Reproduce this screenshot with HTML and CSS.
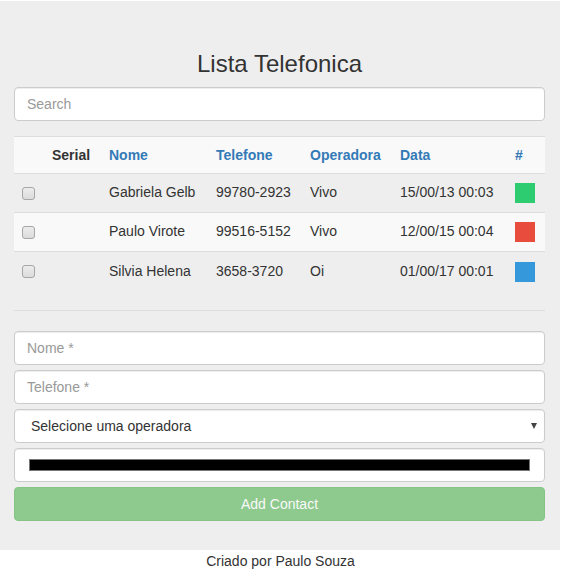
FILE: index.html
```html
<!DOCTYPE html>
<html lang="pt">
<head>
<meta charset="utf-8">
<title>Lista Telefonica</title>
<link rel="stylesheet" href="styles.css">
</head>
<body>
<div class="jumbo">
  <h3 class="title">Lista Telefonica</h3>
  <input class="form-control search" type="text" placeholder="Search">
  <table class="contacts">
    <colgroup>
      <col class="c1"><col class="c2"><col class="c3"><col class="c4"><col class="c5"><col class="c6"><col class="c7">
    </colgroup>
    <tbody>
      <tr class="head">
        <td></td>
        <th class="serial">Serial</th>
        <th><a href="#">Nome</a></th>
        <th><a href="#">Telefone</a></th>
        <th><a href="#">Operadora</a></th>
        <th><a href="#">Data</a></th>
        <th><a href="#">#</a></th>
      </tr>
      <tr>
        <td><input type="checkbox" class="check"></td>
        <td></td>
        <td>Gabriela Gelb</td>
        <td>99780-2923</td>
        <td>Vivo</td>
        <td>15/00/13 00:03</td>
        <td><span class="swatch green"></span></td>
      </tr>
      <tr class="alt">
        <td><input type="checkbox" class="check"></td>
        <td></td>
        <td>Paulo Virote</td>
        <td>99516-5152</td>
        <td>Vivo</td>
        <td>12/00/15 00:04</td>
        <td><span class="swatch red"></span></td>
      </tr>
      <tr>
        <td><input type="checkbox" class="check"></td>
        <td></td>
        <td>Silvia Helena</td>
        <td>3658-3720</td>
        <td>Oi</td>
        <td>01/00/17 00:01</td>
        <td><span class="swatch blue"></span></td>
      </tr>
    </tbody>
  </table>
  <hr class="divider">
  <form class="add-form">
    <input class="form-control" type="text" placeholder="Nome *">
    <input class="form-control" type="text" placeholder="Telefone *">
    <div class="select-wrap">
      <select class="form-control select">
        <option>Selecione uma operadora</option>
      </select>
    </div>
    <input class="form-control" type="color" value="#000000">
    <button class="btn-add" type="button" disabled>Add Contact</button>
  </form>
</div>
<footer class="footer">Criado por Paulo Souza</footer>
</body>
</html>
```
FILE: styles.css
```css
* { box-sizing: border-box; }
html, body { margin: 0; padding: 0; }
body {
  padding-top: 1px;
  background: #fff;
  font-family: "Liberation Sans", Arial, Helvetica, sans-serif;
  font-size: 14px;
  line-height: 1.42857;
  color: #333;
}
.jumbo {
  background: #eee;
  margin-right: 1px;
  padding: 30px 15px 29px 14px;
}
.title {
  margin: 20px 0 10px;
  font-size: 24px;
  font-weight: 500;
  line-height: 1.1;
  text-align: center;
  color: #333;
}
.form-control {
  display: block;
  width: 100%;
  height: 34px;
  padding: 6px 12px;
  font-family: inherit;
  font-size: 14px;
  line-height: 1.42857;
  color: #555;
  background: #fff;
  border: 1px solid #ccc;
  border-radius: 4px;
  box-shadow: inset 0 1px 1px rgba(0,0,0,.075);
  margin: 0;
}
.form-control::placeholder { color: #999; }
.search { margin-bottom: 15px; }
.contacts {
  width: 100%;
  border-collapse: collapse;
  border-spacing: 0;
  table-layout: fixed;
}
.c1 { width: 30px; }
.c2 { width: 57px; }
.c3 { width: 107px; }
.c4 { width: 94px; }
.c5 { width: 90px; }
.c6 { width: 115px; }
.c7 { width: 38px; }
.contacts td, .contacts th {
  padding: 8px;
  border-top: 1px solid #ddd;
  text-align: left;
  vertical-align: middle;
  white-space: nowrap;
  height: 39px;
}
.contacts .head th, .contacts .head td { height: 37px; font-weight: bold; padding-top: 9px; padding-bottom: 7px; }
.contacts .head, .contacts .alt { background: #f9f9f9; }
.contacts a { color: #337ab7; text-decoration: none; }
.check {
  -webkit-appearance: none;
  appearance: none;
  margin: 0;
  width: 13px;
  height: 13px;
  display: block;
  border: 1px solid #a6a6a6;
  border-radius: 3px;
  background: linear-gradient(#ececec, #dcdcdc);
}
.swatch { display: block; width: 20px; height: 20px; }
.green { background: #2ecc71; }
.red { background: #e74c3c; }
.blue { background: #3498db; }
.divider {
  margin: 19px 0 20px;
  border: 0;
  border-top: 1px solid #ddd;
}
.add-form { display: flex; flex-direction: column; gap: 5px; }
.select-wrap { position: relative; }
.select {
  -webkit-appearance: none;
  appearance: none;
  padding: 7px 12px 5px 16px;
  color: #333;
}
.select-wrap::after {
  content: "";
  position: absolute;
  right: 8px;
  top: 14px;
  border-left: 3.5px solid transparent;
  border-right: 3.5px solid transparent;
  border-top: 6px solid #444;
  pointer-events: none;
}
.btn-add {
  display: block;
  width: 100%;
  height: 34px;
  padding: 7px 12px 5px;
  font-family: inherit;
  font-size: 14px;
  line-height: 1.42857;
  color: #fff;
  background: #5cb85c;
  border: 1px solid #4cae4c;
  border-radius: 4px;
  opacity: .65;
}
.footer {
  text-align: center;
  line-height: 20px;
  padding-top: 1px;
  color: #333;
}
```
